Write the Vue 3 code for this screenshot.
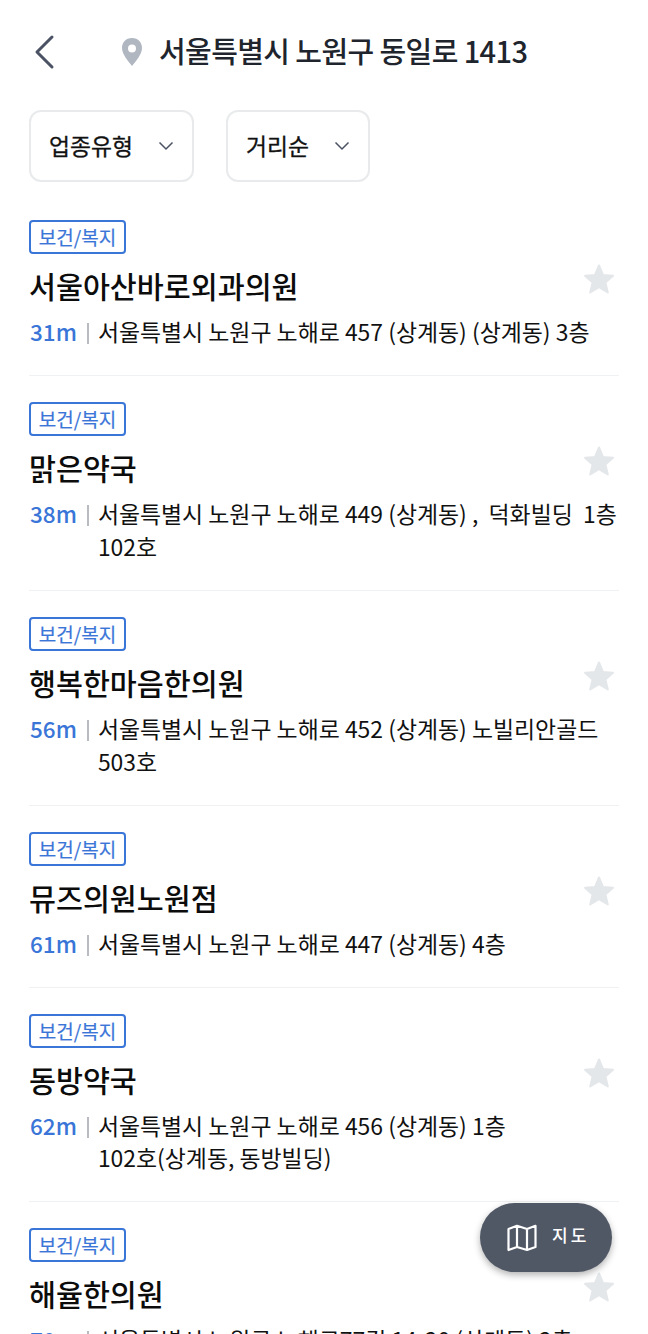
<script setup>
const places = [
  { name: '서울아산바로외과의원', dist: '31m', addr: '서울특별시 노원구 노해로 457 (상계동) (상계동) 3층' },
  { name: '맑은약국', dist: '38m', addr: '서울특별시 노원구 노해로 449 (상계동) ,  덕화빌딩  1층 102호' },
  { name: '행복한마음한의원', dist: '56m', addr: '서울특별시 노원구 노해로 452 (상계동) 노빌리안골드 503호' },
  { name: '뮤즈의원노원점', dist: '61m', addr: '서울특별시 노원구 노해로 447 (상계동) 4층' },
  // word joiner keeps 102호 and the bracket on one line
  { name: '동방약국', dist: '62m', addr: '서울특별시 노원구 노해로 456 (상계동) 1층 102호\u2060(상계동, 동방빌딩)' },
  { name: '해율한의원', dist: '70m', addr: '서울특별시 노원구 노해로77길 14-20 (상계동) 2층' },
]
</script>

<template>
  <div class="page">
    <header class="top">
      <svg class="back" width="24" height="36" viewBox="0 0 24 36">
        <path d="M19 3 L4 18 L19 33" fill="none" stroke="#4a5264" stroke-width="3" stroke-linecap="round" stroke-linejoin="round" />
      </svg>
      <svg class="pin" width="24" height="30" viewBox="0 0 24 30">
        <path fill-rule="evenodd" fill="#b0b7c0" d="M12 1C5.600 1 2 5.800 2 11c0 6 6 13 10 18 4-5 10-12 10-18C22 5.800 18.400 1 12 1zm0 6.500a4 4 0 1 1 0 8 4 4 0 0 1 0-8z" />
      </svg>
      <h1>서울특별시 노원구 동일로 1413</h1>
    </header>

    <div class="filters">
      <button class="filter f1">
        <span>업종유형</span>
        <svg width="16" height="10" viewBox="0 0 16 10"><path d="M1.500 1.500 L8 8 L14.500 1.500" fill="none" stroke="#4a5264" stroke-width="1.500" /></svg>
      </button>
      <button class="filter f2">
        <span>거리순</span>
        <svg width="16" height="10" viewBox="0 0 16 10"><path d="M1.500 1.500 L8 8 L14.500 1.500" fill="none" stroke="#4a5264" stroke-width="1.500" /></svg>
      </button>
    </div>

    <ul class="list">
      <li v-for="p in places" :key="p.name" class="item">
        <span class="tag">보건/복지</span>
        <div class="title-row">
          <h2>{{ p.name }}</h2>
          <svg class="star" width="32" height="32" viewBox="0 0 32 32">
            <path fill="#e4e7ea" stroke="#e4e7ea" stroke-width="2" stroke-linejoin="round" d="M16 2.500 20 12 30 12.800 22.400 19.400 24.800 29.500 16 24.100 7.200 29.500 9.600 19.400 2 12.800 12 12z" />
          </svg>
        </div>
        <div class="info">
          <span class="dist">{{ p.dist }}</span>
          <span class="sep"></span>
          <span class="addr">{{ p.addr }}</span>
        </div>
      </li>
    </ul>

    <button class="map-btn">
      <svg width="30" height="28" viewBox="0 0 30 28">
        <path d="M1.500 5 L10 1.800 L20 5 L28.500 1.800 V23 L20 26 L10 23 L1.500 26 Z M10 1.800 V23 M20 5 V26" fill="none" stroke="#fff" stroke-width="2.200" stroke-linejoin="round" />
      </svg>
      <span>지도</span>
    </button>
  </div>
</template>

<style scoped>
.page {
  position: relative;
  width: 648px;
  height: 1334px;
  overflow: hidden;
  background: #fff;
  font-family: "Noto Sans CJK KR", "Noto Sans", sans-serif;
  color: #111;
}
.top {
  display: flex;
  align-items: center;
  height: 36px;
  padding: 32px 0 2px 33px;
}
.back {
  margin-top: 4px;
}
.pin {
  margin: 4px 0 0 63px;
}
h1 {
  margin: 0 0 0 15px;
  font-size: 29px;
  font-weight: 500;
  color: #20242c;
  letter-spacing: -0.6px;
  white-space: nowrap;
}
.filters {
  display: flex;
  gap: 32px;
  margin: 40px 0 0 29px;
}
.filter {
  display: flex;
  align-items: center;
  justify-content: space-between;
  box-sizing: border-box;
  height: 72px;
  padding: 0 18px;
  background: #fff;
  border: 2px solid #e8eaec;
  border-radius: 12px;
  font: inherit;
  font-size: 22.800px;
  color: #111;
}
.filter span {
  margin-top: -2px;
  -webkit-text-stroke: 0.3px #111;
}
.f1 { width: 165px; }
.f2 { width: 144px; }
.list {
  list-style: none;
  margin: 12px 0 0 29px;
  padding: 0;
  width: 590px;
}
.item {
  padding: 26px 0 27.250px;
  border-bottom: 1px solid #f0f1f2;
}
.tag {
  display: block;
  box-sizing: border-box;
  width: 97px;
  height: 34px;
  line-height: 29px;
  text-align: center;
  border: 2px solid #3a75d8;
  border-radius: 4px;
  font-size: 19px;
  color: #3a75d8;
  -webkit-text-stroke: 0.2px #3a75d8;
}
.title-row {
  display: flex;
  justify-content: space-between;
  align-items: center;
  height: 44px;
  margin-top: 9px;
}
h2 {
  margin: 0;
  font-size: 29.300px;
  font-weight: 500;
  line-height: 44px;
  color: #0c0c0c;
}
.star {
  margin: -12px 4px 0 0;
}
.info {
  display: flex;
  align-items: flex-start;
  margin-top: 8px;
  font-size: 22.500px;
  line-height: 32.750px;
}
.dist {
  flex: none;
  margin-left: 1px;
  font-weight: 500;
  color: #3a75d8;
}
.sep {
  flex: none;
  width: 2px;
  height: 21px;
  margin: 8px 10px 0 10px;
  background: #b8bbc0;
}
.addr {
  margin-left: -1px;
  font-size: 22.900px;
  white-space: pre-wrap;
  word-break: keep-all;
  color: #111;
}
.map-btn {
  position: absolute;
  left: 480px;
  top: 1203px;
  display: flex;
  align-items: center;
  gap: 15px;
  width: 132px;
  height: 69px;
  padding: 0 0 0 27px;
  border: none;
  border-radius: 35px;
  background: #505866;
  box-shadow: 0 3px 7px rgba(0, 0, 0, 0.3);
  color: #fff;
  font: inherit;
  font-size: 17px;
  font-weight: 500;
  letter-spacing: 3px;
}
.map-btn span {
  margin-top: -7px;
}
</style>
